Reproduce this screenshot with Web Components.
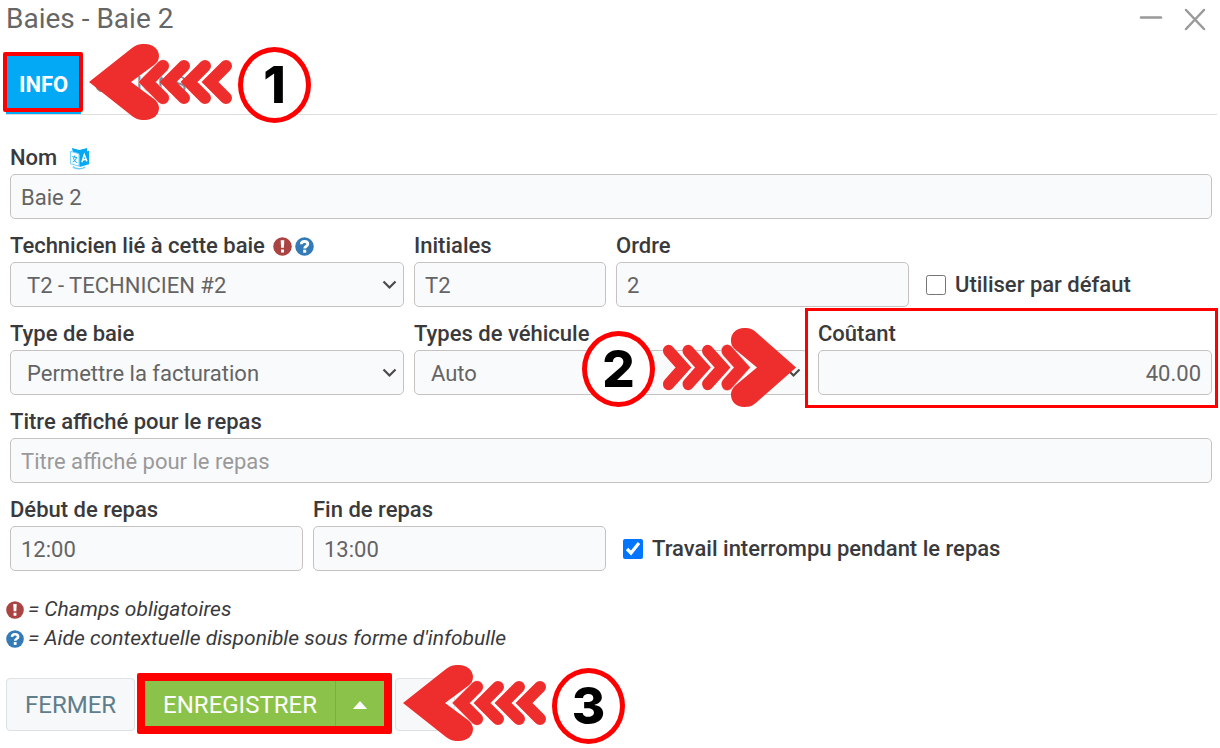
<!DOCTYPE html>
<html lang="fr">
<head>
<meta charset="utf-8">
<title>Baies - Baie 2</title>
<style>
  body { margin: 0; background: #fff; color: #3a3a3c; font: 22px/32px Roboto, sans-serif; }
</style>
</head>
<body>
<bay-window></bay-window>
<script>
const define = (name, html, setup) => {
  const template = document.createElement('template');
  template.innerHTML = html;
  customElements.define(name, class extends HTMLElement {
    connectedCallback() {
      if (this.shadowRoot) return;
      const root = this.attachShadow({ mode: 'open' });
      root.append(template.content.cloneNode(true));
      if (setup) setup(this, root);
    }
  });
};

const fieldCss = `
  :host { display: block; position: relative; min-width: 0; }
  .head { display: flex; align-items: center; height: 32px; gap: 8px; }
  label { font-weight: 500; white-space: nowrap; }
  .control { position: relative; }
  input, select { box-sizing: border-box; display: block; width: 100%; height: 45px; margin: 0;
    border: 1px solid #c6c2c2; border-radius: 5px; background: #f9fafc; color: #646464;
    font: 22px Roboto, sans-serif; padding: 1px 10px 0; outline: 0; }
  input::placeholder { color: #999; opacity: 1; }
  select { appearance: none; padding: 1px 34px 0 16px; }
`;

/* Round status marks: required field and contextual help */
define('status-mark', `
  <style>
    :host { display: inline-block; width: 19px; height: 19px; }
    svg { display: block; width: 100%; height: 100%; }
    .help { display: none; }
    :host([kind=help]) .help { display: inline; }
    :host([kind=help]) .required { display: none; }
  </style>
  <svg viewBox="0 0 19 19" aria-hidden="true">
    <g class="required"><circle cx="9.5" cy="9.5" r="9.3" fill="#a94442"/>
      <path d="M7.7 3.2h3.6l-.4 7.6H8.1zM8 12.5h3v3H8z" fill="#fff"/></g>
    <g class="help"><circle cx="9.5" cy="9.5" r="9.3" fill="#337ab7"/>
      <path d="M6.300 7.200C6.400 5.200 7.600 4.500 9.500 4.500s3.300 1 3.300 2.600c0 2.200-3.100 2.100-3.100 4.300" fill="none" stroke="#fff" stroke-width="2.800"/>
      <path d="M8.200 12.700h3v3h-3z" fill="#fff"/></g>
  </svg>`);

define('translate-mark', `
  <style>:host { display: block; } svg { display: block; }</style>
  <svg width="21" height="23" viewBox="0 0 22 24" aria-hidden="true">
    <path d="M3 1l8 2 8-2v4l-8 3-7-3z" fill="#03a9f4"/>
    <path d="M1.500 4.500l9 2.500v13l-9-2.500z" fill="#fff" stroke="#6fcdf8"/>
    <path d="M11 6.800l10-2.800v14l-10 3z" fill="#03a9f4"/>
    <path d="M3.500 10l5 1.200M6 8.800v1.800M7.800 11c-.6 2.500-2 4-4 4.700M4.500 11c.8 2.500 2 4.500 4 5.500" fill="none" stroke="#03a9f4" stroke-width="1"/>
    <path d="M13.500 16l2.500-8 2.800 7M14.200 13.600l3.800-.8" fill="none" stroke="#fff" stroke-width="1.500"/>
    <path d="M4 20.500c3 2.800 9 3 13 .5" fill="none" stroke="#6fcdf8" stroke-width="1.500"/>
  </svg>`);

define('text-field', `
  <style>${fieldCss}</style>
  <div class="head"><label for="control"></label><slot></slot></div>
  <div class="control"><input id="control" type="text"></div>
  <slot name="callout"></slot>`, (host, root) => {
  root.querySelector('label').textContent = host.getAttribute('label');
  const input = root.querySelector('input');
  input.value = host.getAttribute('value') || '';
  input.placeholder = host.getAttribute('placeholder') || '';
  if (host.hasAttribute('numeric')) input.style.textAlign = 'right';
});

define('select-field', `
  <style>${fieldCss}
    .marks { display: flex; gap: 3px; }
    svg { position: absolute; right: 7px; top: 18px; pointer-events: none; }
  </style>
  <div class="head"><label for="control"></label><span class="marks"><slot></slot></span></div>
  <div class="control"><select id="control"><option></option></select>
    <svg width="15" height="10" viewBox="0 0 15 10" aria-hidden="true"><path d="M1.500 1.500l6 6 6-6" fill="none" stroke="#4a4a4a" stroke-width="2.200"/></svg>
  </div>`, (host, root) => {
  root.querySelector('label').textContent = host.getAttribute('label');
  root.querySelector('option').textContent = host.getAttribute('value');
});

define('check-field', `
  <style>
    :host { display: flex; align-items: flex-end; }
    label { display: flex; align-items: center; gap: 9px; height: 45px; padding-left: 7px; font-weight: 500; white-space: nowrap; }
    input { width: 20px; height: 20px; margin: 0; }
  </style>
  <label><input type="checkbox"><span><slot></slot></span></label>`, (host, root) => {
  root.querySelector('input').checked = host.hasAttribute('checked');
});

/* Numbered circle with a run of chevrons that points at a control */
define('step-callout', `
  <style>
    :host { position: absolute; z-index: 2; display: flex; gap: 6px; align-items: flex-start; pointer-events: none; }
    svg { display: block; width: 144px; height: 78px; flex: none; }
    b { box-sizing: border-box; display: flex; align-items: center; justify-content: center; width: 73px; height: 76px;
      margin-top: 4px; border: 5px solid #f00; border-radius: 50%; background: #fff; color: #000;
      font: 800 51px/64px Inter, sans-serif; }
    :host([direction=right]) { flex-direction: row-reverse; gap: 8px; }
    :host([direction=right]) svg { width: 134px; height: 81px; transform: scaleX(-1); }
  </style>
  <svg viewBox="0 0 144 78" preserveAspectRatio="none" aria-hidden="true">
    <path d="M1 39L44 5C49 1 53 1 57 1C65 1 71 6 71 13C71 17 69 20 66 22L43 39L66 56C69 58 71 62 71 65C71 72 65 77 57 77C53 77 49 77 44 73Z" fill="#ee2d2d"/>
    <g fill="none" stroke-linecap="round">
      <path d="M75 23L59 39L75 55" stroke="#f9b9b9" stroke-width="13"/>
      <path d="M75 23L59 39L75 55M96 23L80 39L96 55M117 23L101 39L117 55M138 23L122 39L138 55" stroke="#ee2d2d" stroke-width="12"/>
    </g>
  </svg><b><slot></slot></b>`);

define('tab-bar', `
  <style>
    :host { display: flex; margin: 0 3px 0 6px; border-bottom: 1px solid #ddd; }
    .tab { position: relative; }
    a { display: block; box-sizing: border-box; height: 59px; padding: 0 13px; line-height: 60px; color: #78909c; text-decoration: none; }
    a.active { background: #03a9f4; color: #fff; font-weight: 700; }
    .frame { position: absolute; inset: -3px -2px 2px -3px; border: 4px solid #f00; border-radius: 2px; z-index: 1; }
    step-callout { left: 82px; top: -12px; }
  </style>
  <div class="tab"><a class="active" href="#info">INFO</a><span class="frame"></span><step-callout>1</step-callout></div>
  <div class="tab"><a href="#options">OPTIONS</a></div>`);

define('window-title', `
  <style>
    :host { display: flex; justify-content: space-between; align-items: center; height: 37px; padding: 0 13px 0 6px; margin-bottom: 18px; }
    h1 { margin: 0; font: 400 28px/37px Roboto, sans-serif; color: #666; }
    div { display: flex; gap: 20px; }
    button { display: block; border: 0; background: none; padding: 0; width: 24px; height: 24px; }
    svg { display: block; stroke: #999; stroke-width: 2.500; stroke-linecap: round; }
  </style>
  <h1><slot></slot></h1>
  <div>
    <button aria-label="Réduire"><svg width="24" height="24"><path d="M2 10.500h20"/></svg></button>
    <button aria-label="Fermer"><svg width="24" height="24"><path d="M3 3l18 19M21 3L3 22"/></svg></button>
  </div>`);

define('form-legend', `
  <style>
    :host { display: block; padding: 24px 6px 0; font-size: 21px; line-height: 29px; font-style: italic; }
    p { display: flex; align-items: center; gap: 4px; margin: 0; }
    status-mark { width: 18px; height: 18px; }
  </style>
  <p><status-mark></status-mark><span>= Champs obligatoires</span></p>
  <p><status-mark kind="help"></status-mark><span>= Aide contextuelle disponible sous forme d'infobulle</span></p>`);

define('action-bar', `
  <style>
    :host { display: flex; gap: 10px; padding: 25px 6px 17px; }
    button { box-sizing: border-box; height: 53px; margin: 0; border: 1px solid #dce1e4; border-radius: 4px;
      background: #f6f8fa; color: #607d8b; font: 24px Roboto, sans-serif; padding: 0 18px; }
    .split { position: relative; display: flex; }
    .split button { border: 0; border-radius: 0; background: #8bc34a; color: #fff; }
    .split .more { width: 50px; padding: 0; border-left: 1px solid #5cb85c; display: flex; align-items: center; justify-content: center; }
    .frame { position: absolute; inset: -5px -7px -3px -8px; border: 8px solid #f00; border-radius: 2px; }
    .blank { width: 60px; }
    step-callout { left: 257px; top: -14px; }
  </style>
  <button>FERMER</button>
  <div class="split"><button>ENREGISTRER</button><button class="more" aria-label="Autres actions"><svg width="14" height="8"><path d="M0 8L7 0l7 8z" fill="#fff"/></svg></button>
    <span class="frame"></span><step-callout>3</step-callout></div>
  <button class="blank" aria-label="Autre"></button>`);

define('bay-form', `
  <style>
    :host { display: block; padding: 27px 8px 0 10px; }
    form { display: grid; grid-template-columns: repeat(12, minmax(0, 1fr)); gap: 11px 10px; }
    .c12 { grid-column: span 12; } .c4 { grid-column: span 4; } .c3 { grid-column: span 3; } .c2 { grid-column: span 2; } .c6 { grid-column: span 6; }
    translate-mark { margin-left: 4px; }
    .frame { position: absolute; inset: -10px -6px -13px -13px; border: 3px solid #f00; }
    step-callout { left: -236px; top: 9px; }
  </style>
  <form>
    <text-field class="c12" label="Nom" value="Baie 2"><translate-mark></translate-mark></text-field>
    <select-field class="c4" label="Technicien lié à cette baie" value="T2 - TECHNICIEN #2"><status-mark></status-mark><status-mark kind="help"></status-mark></select-field>
    <text-field class="c2" label="Initiales" value="T2"></text-field>
    <text-field class="c3" label="Ordre" value="2"></text-field>
    <check-field class="c3">Utiliser par défaut</check-field>
    <select-field class="c4" label="Type de baie" value="Permettre la facturation"></select-field>
    <select-field class="c4" label="Types de véhicule" value="Auto"></select-field>
    <text-field class="c4" label="Coûtant" value="40.00" numeric><span slot="callout" class="frame"></span><step-callout slot="callout" direction="right">2</step-callout></text-field>
    <text-field class="c12" label="Titre affiché pour le repas" placeholder="Titre affiché pour le repas"></text-field>
    <text-field class="c3" label="Début de repas" value="12:00"></text-field>
    <text-field class="c3" label="Fin de repas" value="13:00"></text-field>
    <check-field class="c6" checked>Travail interrompu pendant le repas</check-field>
  </form>`);

define('bay-window', `
  <style>:host { display: block; }</style>
  <window-title>Baies - Baie 2</window-title>
  <tab-bar></tab-bar>
  <bay-form></bay-form>
  <form-legend></form-legend>
  <action-bar></action-bar>`);
</script>
</body>
</html>
